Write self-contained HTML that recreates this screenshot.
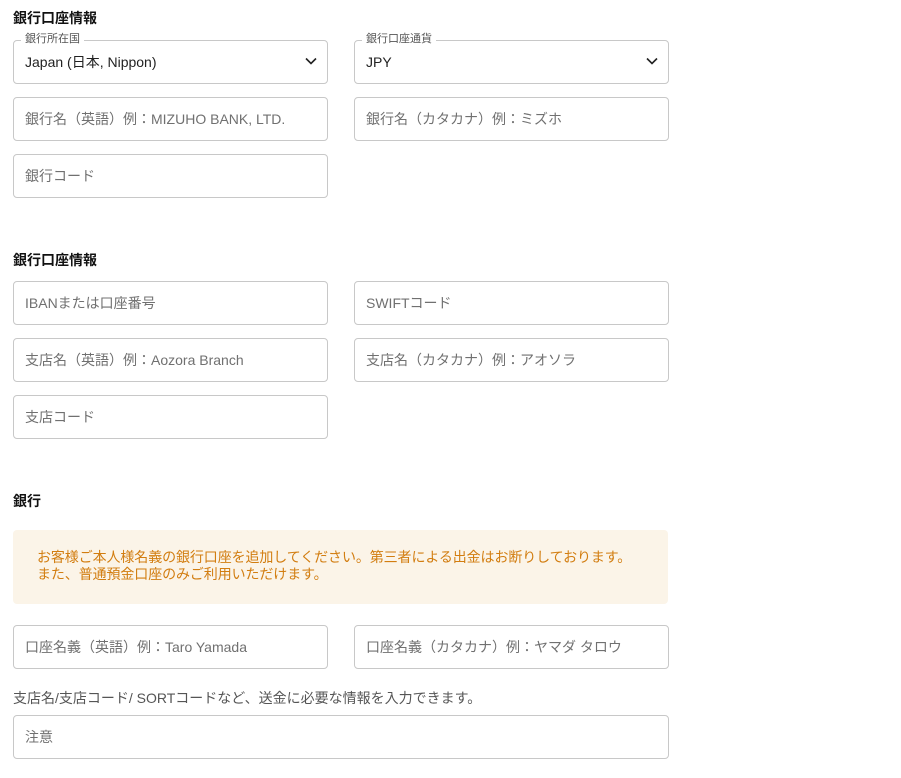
<!DOCTYPE html>
<html><head><meta charset="utf-8"><style>
body{margin:0;background:#fff;font-family:"Liberation Sans","Noto Sans CJK JP",sans-serif;width:901px;height:778px;position:relative;overflow:hidden}
.h{position:absolute;left:13px;font-size:14px;font-weight:bold;color:#111}
.f{position:absolute;border:1px solid #c8c8c8;border-radius:4px;font-size:14px;color:#707070;line-height:42px;padding-left:11px;box-sizing:border-box;height:44px;width:315px}
.sel{color:#222}
.lab{position:absolute;top:-9px;left:7px;background:#fff;padding:0 4px;font-size:11px;line-height:14px;color:#555}
.chev{position:absolute;right:10px;top:16px}
.note{position:absolute;left:13px;top:530px;width:655px;height:74px;background:#fbf4e8;border-radius:4px;color:#d27d10;font-size:14px;line-height:17px;padding:19px 0 0 24px;box-sizing:border-box;letter-spacing:-0.1px}
</style></head><body>
<div class="h" style="top:8px">銀行口座情報</div>
<div class="f sel" style="left:13px;top:40px"><span class="lab">銀行所在国</span>Japan (日本, Nippon)<svg class="chev" width="12" height="8" viewBox="0 0 12 8"><path d="M1 1.5l5 5 5-5" fill="none" stroke="#222" stroke-width="1.6"/></svg></div>
<div class="f sel" style="left:354px;top:40px"><span class="lab">銀行口座通貨</span>JPY<svg class="chev" width="12" height="8" viewBox="0 0 12 8"><path d="M1 1.5l5 5 5-5" fill="none" stroke="#222" stroke-width="1.6"/></svg></div>
<div class="f" style="left:13px;top:97px">銀行名（英語）例：MIZUHO BANK, LTD.</div>
<div class="f" style="left:354px;top:97px">銀行名（カタカナ）例：ミズホ</div>
<div class="f" style="left:13px;top:154px">銀行コード</div>
<div class="h" style="top:250px">銀行口座情報</div>
<div class="f" style="left:13px;top:281px">IBANまたは口座番号</div>
<div class="f" style="left:354px;top:281px">SWIFTコード</div>
<div class="f" style="left:13px;top:338px">支店名（英語）例：Aozora Branch</div>
<div class="f" style="left:354px;top:338px">支店名（カタカナ）例：アオソラ</div>
<div class="f" style="left:13px;top:395px">支店コード</div>
<div class="h" style="top:491px">銀行</div>
<div class="note">お客様ご本人様名義の銀行口座を追加してください。第三者による出金はお断りしております。<br>また、普通預金口座のみご利用いただけます。</div>
<div class="f" style="left:13px;top:625px">口座名義（英語）例：Taro Yamada</div>
<div class="f" style="left:354px;top:625px">口座名義（カタカナ）例：ヤマダ タロウ</div>
<div style="position:absolute;left:13px;top:688px;font-size:14px;color:#555">支店名/支店コード/ SORTコードなど、送金に必要な情報を入力できます。</div>
<div class="f" style="left:13px;top:715px;width:656px">注意</div>
</body></html>
